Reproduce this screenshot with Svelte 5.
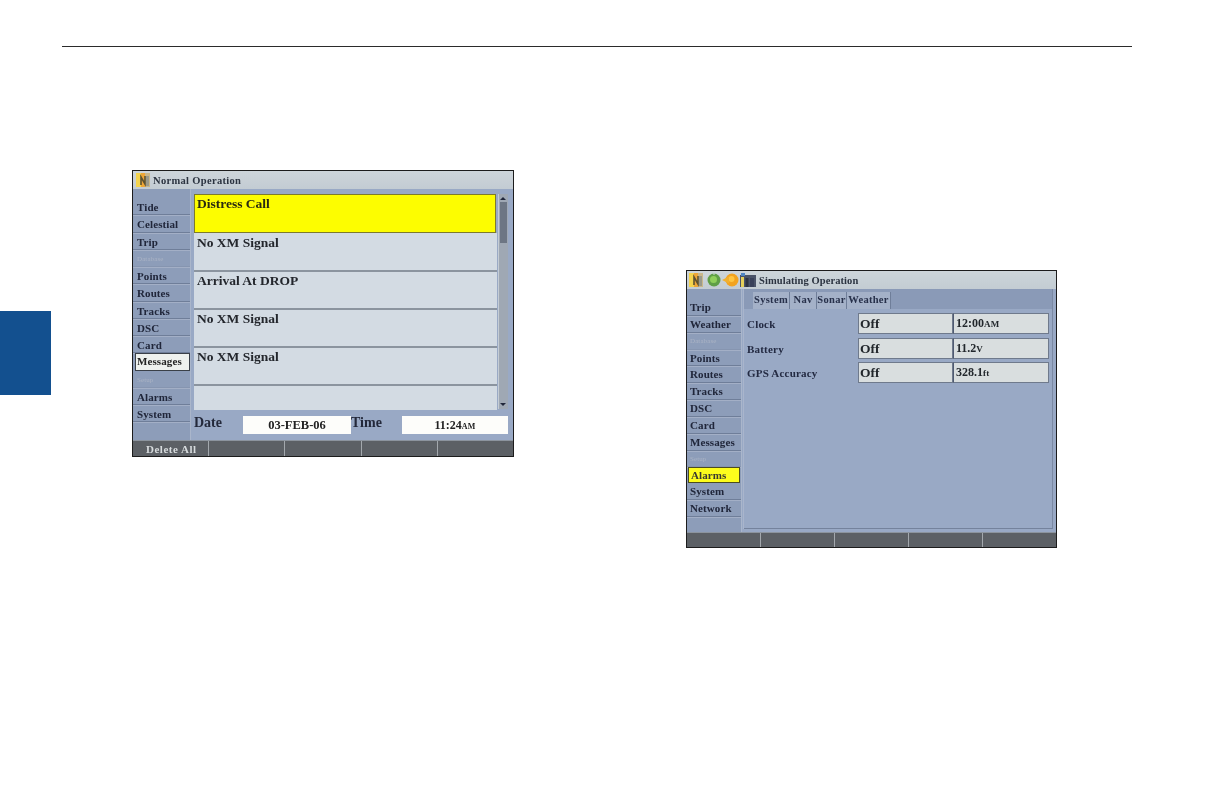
<script>
  const left = [
    { t: 'Tide' }, { t: 'Celestial' }, { t: 'Trip' }, { t: 'Database', dim: true },
    { t: 'Points' }, { t: 'Routes' }, { t: 'Tracks' }, { t: 'DSC' }, { t: 'Card' },
    { t: 'Messages', sel: 'white' }, { t: 'Setup', dim: true }, { t: 'Alarms' }, { t: 'System' }
  ];
  const right = [
    { t: 'Trip' }, { t: 'Weather' }, { t: 'Database', dim: true }, { t: 'Points' },
    { t: 'Routes' }, { t: 'Tracks' }, { t: 'DSC' }, { t: 'Card' }, { t: 'Messages' },
    { t: 'Setup', dim: true }, { t: 'Alarms', sel: 'yellow' }, { t: 'System' }, { t: 'Network' }
  ];
  const msgs = ['Distress Call', 'No XM Signal', 'Arrival At DROP', 'No XM Signal', 'No XM Signal', ''];
  const tabs = ['System', 'Nav', 'Sonar', 'Weather'];
  const settings = [
    { k: 'Clock', a: 'Off', v: '12:00', u: 'AM' },
    { k: 'Battery', a: 'Off', v: '11.2', u: 'V' },
    { k: 'GPS Accuracy', a: 'Off', v: '328.1', u: 'ft' }
  ];
</script>

{#snippet mapIcon()}
  <svg class="ico" viewBox="0 0 16 16" width="16" height="16">
    <rect x="0" y="1" width="14" height="14" fill="#c9b78a"/>
    <rect x="0" y="1" width="5" height="14" fill="#f4d44e"/>
    <rect x="5" y="1" width="4" height="14" fill="#eda637"/>
    <path d="M5 13V5l4 7V4" fill="none" stroke="#5d5230" stroke-width="1.6"/>
    <rect x="10" y="4" width="3" height="10" fill="#9a9a8c"/>
  </svg>
{/snippet}

<main class="page">
  <div class="tab"></div>
  <div class="rule"></div>
  <div class="shots">
    <section class="screen one">
      <header class="title">
        {@render mapIcon()}
        <span>Normal Operation</span>
      </header>
      <div class="body">
        <nav class="side">
          {#each left as it}
            <div class="item" class:dim={it.dim} class:white={it.sel === 'white'}>{it.t}</div>
          {/each}
        </nav>
        <div class="main">
          <div class="listwrap">
            <ul class="list">
              {#each msgs as m, i}
                <li class:hl={i === 0}>{m}</li>
              {/each}
            </ul>
            <div class="scroll">
              <i class="arrow up"></i>
              <i class="thumb"></i>
              <i class="arrow down"></i>
            </div>
          </div>
          <div class="dt">
            <b>Date</b>
            <output class="d">03-FEB-06</output>
            <b>Time</b>
            <output class="t">11:24<small>AM</small></output>
          </div>
        </div>
      </div>
      <footer class="keys">
        <span>Delete All</span><span></span><span></span><span></span><span></span>
      </footer>
    </section>

    <section class="screen two">
      <header class="title">
        {@render mapIcon()}
        <svg class="ico" viewBox="0 0 16 16" width="16" height="16">
          <circle cx="8" cy="8" r="6.5" fill="#5f9f46"/>
          <circle cx="7.5" cy="7.5" r="3.5" fill="#8fcf5a"/>
          <path d="M8 0v3" stroke="#cfd8d8"/>
        </svg>
        <svg class="ico" viewBox="0 0 16 16" width="16" height="16">
          <circle cx="9" cy="8" r="6.5" fill="#f2a31f"/>
          <circle cx="8.5" cy="7" r="3" fill="#ffc53f"/>
          <path d="M-1 8l7-3.5v7z" fill="#f0b030"/>
        </svg>
        <svg class="ico" viewBox="0 0 16 16" width="16" height="16">
          <rect x="0" y="3" width="16" height="12" fill="#4a5368"/>
          <rect x="1" y="5" width="3" height="10" fill="#e4cf5a"/>
          <rect x="5.5" y="6" width="3" height="9" fill="#2d3342"/>
          <rect x="10" y="6" width="4" height="9" fill="#39415a"/>
          <rect x="1" y="1" width="4" height="3" fill="#4f86c4"/>
        </svg>
        <span class="t2">Simulating Operation</span>
      </header>
      <div class="body">
        <nav class="side">
          {#each right as it}
            <div class="item" class:dim={it.dim} class:yellow={it.sel === 'yellow'}>{it.t}</div>
          {/each}
        </nav>
        <div class="panel">
          <div class="tabs">
            {#each tabs as t}<span>{t}</span>{/each}
          </div>
          <div class="grid">
            {#each settings as s}
              <div class="lab">{s.k}</div>
              <div class="cell">{s.a}</div>
              <div class="cell val">{s.v}<small>{s.u}</small></div>
            {/each}
          </div>
        </div>
      </div>
      <footer class="keys">
        <span></span><span></span><span></span><span></span><span></span>
      </footer>
    </section>
  </div>
</main>

<style>
  :global(body) { margin: 0; background: #fff; }
  .page { position: relative; width: 1224px; height: 796px; overflow: hidden; background: #fff; font-family: "Liberation Serif", serif; }
  .tab { position: absolute; left: 0; top: 311px; width: 51px; height: 84px; background: #13508f; }
  .rule { margin: 46px 0 0 62px; width: 1070px; height: 1px; background: #2b2b2b; }
  .shots { display: flex; align-items: flex-start; }
  .screen { box-sizing: border-box; display: flex; flex-direction: column; background: #99a9c5; border: 1px solid #1c1c1c; color: #1b2030; }
  .screen > * { filter: blur(.45px); }
  .one { width: 382px; height: 287px; margin: 123px 0 0 132px; }
  .two { width: 371px; height: 278px; margin: 223px 0 0 172px; }
  .title { display: flex; align-items: center; height: 18px; flex: none; background: linear-gradient(#cdd5da, #c3ccd3); font-size: 10.5px; font-weight: 700; letter-spacing: .32px; color: #2b3340; padding-left: 3px; }
  .two .title { padding-left: 2px; gap: 1px; }
  .ico { flex: none; filter: blur(.6px); overflow: visible; }
  .title span { margin-left: 1px; }
  .title .t2 { margin-left: 2px; letter-spacing: .08px; }
  .body { flex: 1; display: flex; min-height: 0; }
  .side { width: 58px; flex: none; box-sizing: border-box; padding-top: 9px; background: #8d9db9; border-right: 1px solid #aab6cb; display: flex; flex-direction: column; }
  .two .side { width: 55px; padding-top: 10px; }
  .item { box-sizing: border-box; height: 17.25px; line-height: 18px; padding-left: 4px; font-size: 11px; font-weight: 700; letter-spacing: .1px; color: #20263a; border-bottom: 1px solid #6f7e99; box-shadow: 0 1px 0 #a3afc6; }
  .two .item { height: 16.85px; padding-left: 3px; line-height: 16px; }
  .item.dim { color: #aab3c5; font-size: 7px; font-weight: 400; border-color: #8695b0; }
  .item.white { background: #eef1ee; border: 1px solid #3a4048; color: #222; margin: 0 0 0 2px; padding-left: 1px; width: 55px; line-height: 15px; box-shadow: none; }
  .two .item.yellow { background: #fdfd1c; border: 1px solid #4c4c20; margin: 0 1px 0 1px; padding-left: 2px; line-height: 14px; color: #3a3a30; height: 16px; box-shadow: none; }
  .main { flex: 1; display: flex; flex-direction: column; padding: 5px 6px 0 3px; }
  .listwrap { display: flex; gap: 1px; }
  .list { list-style: none; margin: 0; padding: 0; width: 303px; }
  .list li { box-sizing: border-box; height: 38px; padding: 2px 0 0 3px; line-height: 14px; font-size: 13.5px; font-weight: 700; color: #23262c; background: #d3dbe3; border-bottom: 2px solid #8b949f; }
  .list li.hl { height: 39px; width: 302px; background: #fdfd00; border: 1px solid #7d7a2c; padding: 2px 0 0 2px; color: #2a2a10; }
  .list li:nth-child(2) { height: 39px; padding-top: 3px; }
  .list li:last-child { height: 24px; border-bottom: 0; }
  .scroll { position: relative; width: 10px; height: 215px; background: #9fa8b4; border-left: 1px solid #c4ccd4; box-sizing: border-box; }
  .thumb { display: block; position: absolute; top: 8px; left: 1px; width: 7px; height: 41px; background: #6d7684; }
  .arrow { position: absolute; left: 1px; width: 0; height: 0; border: 3.5px solid transparent; }
  .arrow.up { top: 0; border-bottom-color: #20263a; }
  .arrow.down { bottom: 0; border-top-color: #20263a; }
  .dt { display: flex; align-items: center; margin-top: 6px; font-size: 14px; height: 18px; }
  .dt b { color: #23283a; margin-bottom: 4px; }
  .dt output { background: #fdfdfa; height: 18px; line-height: 18px; font-size: 12.5px; font-weight: 700; text-align: center; color: #222; display: block; }
  .dt .d { width: 108px; margin: 0 0 0 21px; }
  .dt b:nth-of-type(2) { margin-left: 0; width: 51px; box-sizing: border-box; }
  .dt .t { width: 106px; font-size: 12px; }
  .dt small, .val small { font-size: 8px; letter-spacing: .2px; }
  .val small { font-size: 9px; }
  .keys { height: 15px; flex: none; display: flex; background: #5c6065; border-top: 1px solid #8c949e; }
  .two .keys { height: 14px; }
  .keys span { flex: 1; border-left: 1px solid #a3a8ad; font-size: 11px; font-weight: 700; letter-spacing: .5px; color: #d7dbdd; padding: 1px 0 0 13px; line-height: 14px; box-sizing: border-box; white-space: nowrap; }
  .keys span:first-child { border-left: 0; }
  .panel { flex: 1; display: flex; flex-direction: column; margin: 0 3px 3px 2px; border-right: 1px solid #7b89a3; border-bottom: 1px solid #74829c; box-shadow: -1px 0 0 #a9b5cc; }
  .tabs { display: flex; padding: 3px 0 0 9px; height: 17px; font-size: 10.5px; font-weight: 700; letter-spacing: .3px; color: #27304a; background: #8a9ab7; }
  .tabs span { height: 17px; line-height: 16px; text-align: center; background: #a4b1c8; border-right: 1px solid #6f7e99; box-sizing: border-box; }
  .tabs span:nth-child(1) { width: 37px; }
  .tabs span:nth-child(2) { width: 27px; }
  .tabs span:nth-child(3) { width: 30px; }
  .tabs span:nth-child(4) { width: 44px; }
  .grid { display: grid; grid-template-columns: 111px 95px 96px; grid-auto-rows: 24.5px; padding: 4px 0 0 3px; }
  .lab { font-size: 11px; font-weight: 700; letter-spacing: .2px; color: #232a42; line-height: 22px; }
  .cell { background: #d9dedf; border: 1px solid #6f7a8c; box-sizing: border-box; height: 21px; font-size: 13.5px; font-weight: 700; color: #22272c; padding-left: 1px; line-height: 19px; }
  .cell.val { border-left: 1px solid #4f5a72; font-size: 12px; padding-left: 2px; }
</style>
